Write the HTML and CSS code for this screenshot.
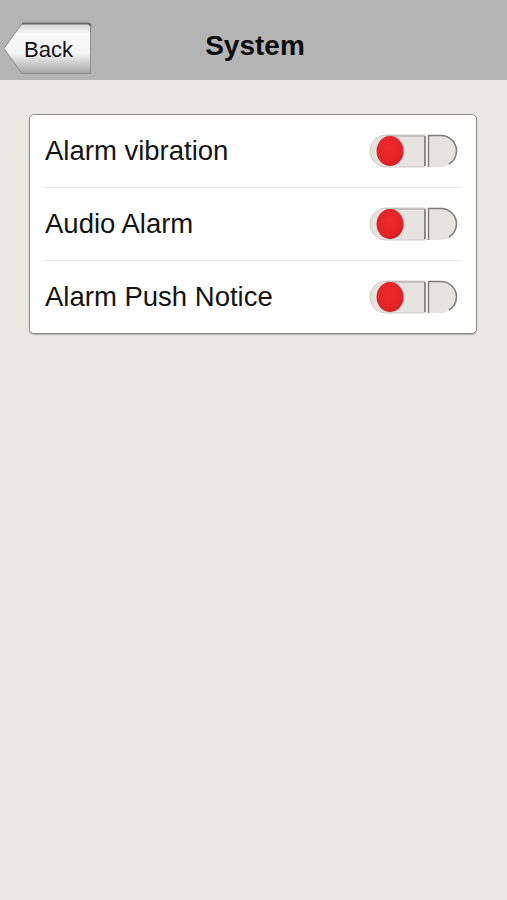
FILE: index.html
```html
<!DOCTYPE html>
<html lang="en">

<head>
  <meta charset="UTF-8" />
  <title>System</title>
  <link rel="stylesheet" href="styles.css">
</head>

<body>
  <svg class="defs" width="0" height="0">
    <defs>
      <linearGradient id="backFill" x1="0" y1="0" x2="0" y2="1">
        <stop offset="0" stop-color="#d0d0d0" />
        <stop offset="0.2" stop-color="#fafafa" />
        <stop offset="0.6" stop-color="#f4f4f4" />
        <stop offset="1" stop-color="#a6a6a6" />
      </linearGradient>
      <radialGradient id="knobFill" cx="0.45" cy="0.4" r="0.6">
        <stop offset="0" stop-color="#ee2a2c" />
        <stop offset="0.85" stop-color="#e32226" />
        <stop offset="1" stop-color="#c81c20" />
      </radialGradient>
      <symbol id="toggle" viewBox="0 0 89 34">
        <path d="M17,1 H56 V33 H17 A16,16 0 0 1 17,1 Z" fill="#e6e4de" stroke="#cfcdc7" />
        <path d="M17,2 H55" stroke="#b9b7b1" stroke-width="1.5" />
        <path d="M56,2 V32" stroke="#6f6f6f" stroke-width="1.5" />
        <path d="M59,1 H72 A16,16 0 0 1 72,33 H59 Z" fill="#e6e4de" />
        <path d="M59.5,33 V1.5 H72 A15.5,15.5 0 0 1 87.5,17 A15.5,15.5 0 0 1 80,30" fill="none" stroke="#7d7d7d" stroke-width="1.5" />
        <ellipse cx="21.5" cy="17.5" rx="13.5" ry="15" fill="#b8b6b0" opacity="0.6" />
        <ellipse cx="21" cy="17" rx="13.5" ry="15" fill="url(#knobFill)" />
      </symbol>
    </defs>
  </svg>

  <header class="topbar">
    <a class="back-btn" href="#">
      <svg class="back-shape" viewBox="0 0 89 53">
        <path d="M19,1.5 H85 Q87.5,1.5 87.5,4 V51.5 H19 L1,26.5 Z" fill="url(#backFill)" stroke="#8e8e8e" />
        <path d="M19,1.5 H85 Q87.5,1.5 87.5,4" fill="none" stroke="#6a6a6a" stroke-width="2" />
      </svg>
      <span class="back-label">Back</span>
    </a>
    <h1 class="title">System</h1>
    <div></div>
  </header>

  <main class="content">
    <section class="card">
      <div class="row">
        <span class="row-label">Alarm vibration</span>
        <svg class="toggle"><use href="#toggle" /></svg>
      </div>
      <div class="row">
        <span class="row-label">Audio Alarm</span>
        <svg class="toggle"><use href="#toggle" /></svg>
      </div>
      <div class="row">
        <span class="row-label">Alarm Push Notice</span>
        <svg class="toggle"><use href="#toggle" /></svg>
      </div>
    </section>
  </main>
</body>

</html>
```

FILE: styles.css
```css
body {
  margin: 0;
  background-color: #ebe8e4;
  font-family: 'Liberation Sans', Arial, sans-serif;
  color: #111;
  height: 100vh;
}

.defs {
  position: absolute;
}

/* Top navigation bar */
.topbar {
  height: 80px;
  box-sizing: border-box;
  background-color: #b4b4b4;
  display: grid;
  grid-template-columns: 1fr auto 1fr;
  align-items: start;
  padding-left: 3px;
}

.back-btn {
  position: relative;
  width: 89px;
  height: 53px;
  margin-top: 22px;
  display: flex;
  align-items: center;
  padding-left: 21px;
  box-sizing: border-box;
  text-decoration: none;
  color: #111;
}

.back-shape {
  position: absolute;
  left: 0;
  top: 0;
  width: 89px;
  height: 53px;
}

.back-label {
  position: relative;
  font-size: 22px;
  margin-top: 2px;
}

.title {
  margin: 30px 0 0 0;
  font-size: 28px;
  line-height: 32px;
  font-weight: bold;
  color: #0c0c0c;
}

/* Settings card */
.content {
  padding: 34px 30px 0 29px;
}

.card {
  background-color: #fff;
  border: 1px solid #8c8c8c;
  border-radius: 5px;
  box-shadow: 0 1px 1px rgba(0, 0, 0, 0.25);
}

.row {
  height: 72px;
  margin: 0 15px 0 15px;
  display: flex;
  align-items: center;
  justify-content: space-between;
  border-bottom: 1px solid #e6e6e6;
}

.row:last-child {
  border-bottom: none;
}

.row-label {
  font-size: 27.5px;
  color: #141414;
}

.toggle {
  width: 89px;
  height: 34px;
  margin-right: 3px;
}
```
